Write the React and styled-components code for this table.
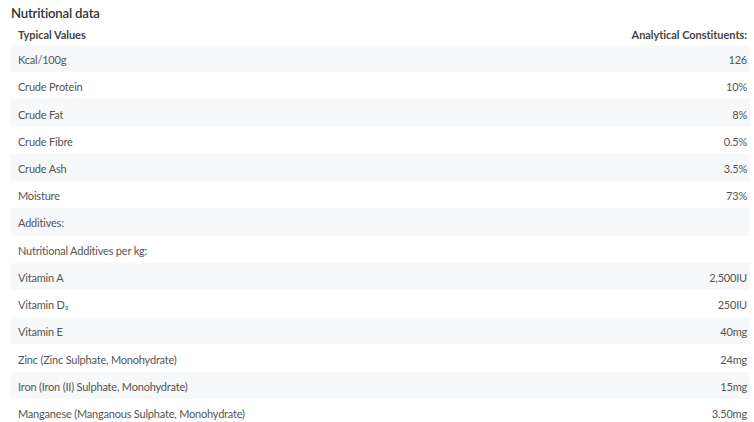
import styled, { createGlobalStyle } from "styled-components"

const GlobalStyle = createGlobalStyle`
  body {
    margin: 0;
    background: #fff;
    font-family: Lato, "Liberation Sans", sans-serif;
  }
`

const Wrapper = styled.section`
  padding: 4px 4px 0 11px;
`

const Title = styled.h3`
  margin: 0;
  font-size: 13.2px;
  font-weight: 600;
  letter-spacing: -0.2px;
  color: #333;
  line-height: 18px;
`

const Table = styled.table`
  width: 100%;
  border-collapse: collapse;
  font-size: 11px;
  letter-spacing: -0.2px;
  color: #555;
`

const HeadCell = styled.th`
  box-sizing: border-box;
  font-weight: 700;
  letter-spacing: -0.05px;
  color: #444;
  text-align: ${p => (p.$right ? "right" : "left")};
  padding: 1px 3px 0 7px;
  height: 23px;
`

const Row = styled.tr`
  background: ${p => (p.$striped ? "#f7f8f9" : "transparent")};
`

const Cell = styled.td`
  box-sizing: border-box;
  text-align: ${p => (p.$right ? "right" : "left")};
  padding: 3px 3px 0 7px;
  height: 27.23px;
  line-height: 18px;
`

const rows = [
  ["Kcal/100g", "126"],
  ["Crude Protein", "10%"],
  ["Crude Fat", "8%"],
  ["Crude Fibre", "0.5%"],
  ["Crude Ash", "3.5%"],
  ["Moisture", "73%"],
  ["Additives:", ""],
  ["Nutritional Additives per kg:", ""],
  ["Vitamin A", "2,500IU"],
  ["Vitamin D₃", "250IU"],
  ["Vitamin E", "40mg"],
  ["Zinc (Zinc Sulphate, Monohydrate)", "24mg"],
  ["Iron (Iron (II) Sulphate, Monohydrate)", "15mg"],
  ["Manganese (Manganous Sulphate, Monohydrate)", "3.50mg"],
]

function App() {
  return (
    <>
      <GlobalStyle />
      <Wrapper>
        <Title>Nutritional data</Title>
        <Table>
          <thead>
            <tr>
              <HeadCell>Typical Values</HeadCell>
              <HeadCell $right>Analytical Constituents:</HeadCell>
            </tr>
          </thead>
          <tbody>
            {rows.map(([name, value], i) => (
              <Row key={name} $striped={i % 2 === 0}>
                <Cell>{name}</Cell>
                <Cell $right>{value}</Cell>
              </Row>
            ))}
          </tbody>
        </Table>
      </Wrapper>
    </>
  )
}

export default App
